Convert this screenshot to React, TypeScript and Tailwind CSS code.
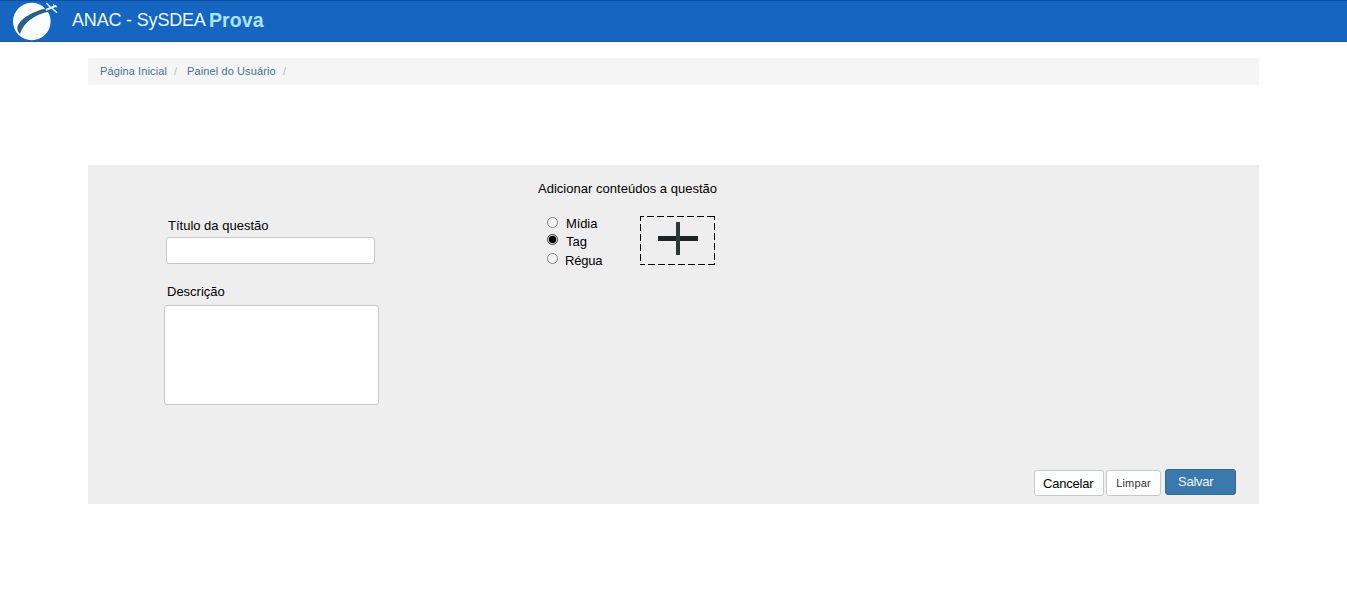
import { useState } from "react";

function Logo() {
  return (
    <svg className="block h-[41px] w-[48px] shrink-0" viewBox="0 0 48 41">
      <circle cx="20.8" cy="20.5" r="18.8" fill="#fafffe" />
      <path d="M6.5 25 C10 17.5 20 11 36 7 L38.5 10.5 C24 13.5 13 20.5 9 33 C6.5 31 6 27 6.5 25 Z" fill="#2a6285" />
      <path d="M33 5.5 L43 8.5 L42 11.5 L35 10" fill="#1a64b0" />
      <g stroke="#dff3fb" fill="none" strokeLinecap="round">
        <path d="M35.5 8.7 L44.5 5" strokeWidth="2" />
        <path d="M40 7 L35.8 2.6" strokeWidth="1.5" />
        <path d="M40.5 6.8 L45.5 11.2" strokeWidth="1.5" />
        <path d="M43 5.5 L42.5 3.2 M44 5.2 L45.8 6" strokeWidth="1" />
      </g>
    </svg>
  );
}

const options = [
  { label: "Mídia", row: "h-[18px]", dot: "mt-[1px]", text: "ml-[8px] tracking-[-0.1px]" },
  { label: "Tag", row: "h-[19px]", dot: "mt-0", text: "ml-[8px]" },
  { label: "Régua", row: "h-[18px]", dot: "mt-0", text: "ml-[7px] tracking-[-0.2px]" },
];

export default function App() {
  const [selected, setSelected] = useState("Tag");
  return (
    <div className="flex h-[589px] w-[1347px] flex-col overflow-hidden bg-white font-['Liberation_Sans',Arial,sans-serif] text-black">
      <header className="flex h-[42px] shrink-0 border-t border-b border-t-[#0b50a5] border-b-[#24588f] bg-[#1665c1] pl-[11px]">
        <Logo />
        <h1 className="ml-[13px] flex whitespace-nowrap leading-[39px] text-[#ecfaff]">
          <span className="w-[137px] text-[18px] tracking-[-0.18px]">ANAC - SySDEA</span>
          <span className="text-[19.5px] font-bold tracking-[0.1px] text-[#a9e5fb]">Prova</span>
        </h1>
      </header>

      <nav className="mt-4 ml-[88px] flex h-[27px] w-[1171px] shrink-0 rounded-[2px] bg-[#f5f5f5] pl-3 text-[11px] leading-[27px] tracking-[0.11px] whitespace-nowrap text-[#457290]">
        <a className="w-[74px]">Página Inicial</a>
        <span className="w-[13px] text-[#bbb]">/</span>
        <a className="w-[96px]">Painel do Usuário</a>
        <span className="text-[#bbb]">/</span>
      </nav>

      <main className="mt-20 ml-[88px] flex h-[339px] w-[1171px] shrink-0 flex-col bg-[#eeeeee]">
        <div className="flex h-[304px]">
          <section className="flex w-[450px] flex-col pl-[76px] text-[13px]">
            <label className="mt-[52px] ml-[4px] h-[20px] leading-[18px]">Título da questão</label>
            <input className="ml-[2px] h-[27px] w-[209px] rounded-[3px] border border-[#c8c8c8] bg-white px-2 outline-none" />
            <label className="mt-[18px] ml-[3px] h-[23px] leading-[20px]">Descrição</label>
            <textarea className="h-[100px] w-[215px] resize-none rounded-[3px] border border-[#c8c8c8] bg-white p-2 outline-none" />
          </section>

          <section className="pt-[15px] text-[13px]">
            <h2 className="h-[36px] leading-[18px] tracking-[0.02px] whitespace-nowrap">Adicionar conteúdos a questão</h2>
            <div className="flex">
              <div className="flex w-[102px] flex-col pl-[9px]">
                {options.map((o) => (
                  <label key={o.label} className={`flex ${o.row}`}>
                    <input
                      type="radio"
                      name="content"
                      className="sr-only"
                      checked={selected === o.label}
                      onChange={() => setSelected(o.label)}
                    />
                    <svg className={`h-[11px] w-[11px] shrink-0 ${o.dot}`} viewBox="0 0 11 11">
                      <circle cx="5.5" cy="5.5" r="5" fill="#f4f4f4" stroke={selected === o.label ? "#222" : "#777"} strokeWidth=".9" />
                      {selected === o.label && <circle cx="5.5" cy="5.5" r="3.7" fill="#000" />}
                    </svg>
                    <span className={`leading-[16px] ${o.text}`}>{o.label}</span>
                  </label>
                ))}
              </div>
              <button className="block h-[49px] w-[75px]" aria-label="Adicionar">
                <svg className="block h-[49px] w-[75px]" viewBox="0 0 75 49">
                  <g fill="none" stroke="#000" strokeDasharray="7 3">
                    <path d="M0 .5H75" strokeDashoffset="3" />
                    <path d="M74.5 0V49" strokeDashoffset="3" />
                    <path d="M0 48.5H75" strokeDashoffset="2" />
                    <path d="M.5 0V49" strokeDashoffset="2" />
                  </g>
                  <path d="M18 22.5H58" stroke="#1e2424" strokeWidth="5" />
                  <path d="M38 6V39" stroke="#303737" strokeWidth="4" />
                </svg>
              </button>
            </div>
          </section>
        </div>

        <div className="flex justify-end pr-[23px] whitespace-nowrap">
          <button className="mt-px h-[26px] w-[70px] rounded-[3px] border border-[#c5cbcb] bg-white pl-[8px] text-left text-[13px] leading-[25px] tracking-[-0.2px]">Cancelar</button>
          <button className="mt-px ml-[2px] h-[26px] w-[55px] rounded-[3px] border border-[#c5cbcb] bg-white text-[11px] leading-[24px] tracking-[0.15px] text-[#333]">Limpar</button>
          <button className="ml-[4px] h-[26px] w-[71px] rounded-[3px] border border-[#35678f] bg-[#3b78ab] pl-[12px] text-left text-[13px] leading-[24px] tracking-[-0.25px] text-[#f0faff]"><span className="block h-[24px]">Salvar</span></button>
        </div>
      </main>
    </div>
  );
}
